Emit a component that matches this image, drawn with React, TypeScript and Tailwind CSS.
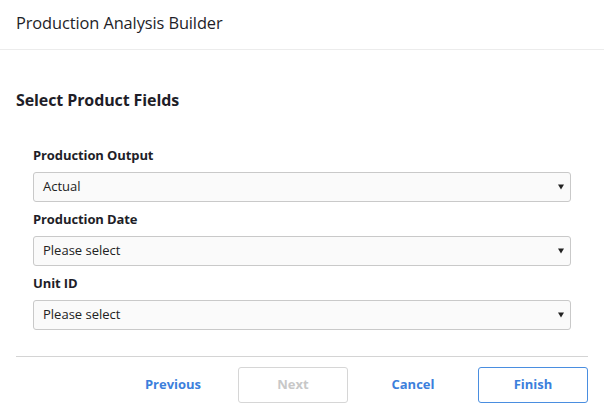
import React from 'react'

const fields = [
  { label: 'Production Output', value: 'Actual' },
  { label: 'Production Date', value: 'Please select' },
  { label: 'Unit ID', value: 'Please select' },
]

function SelectBox({ value }: { value: string }) {
  return (
    <div className="h-[30px] flex items-center justify-between bg-[#fafafa] border border-[#c9c9c9] rounded-[3px] pl-[9px] pr-[6px]">
      <span className="text-[13px] text-[#222]">{value}</span>
      <svg width="6" height="6" viewBox="0 0 6 6">
        <path d="M0 0.5 H6 L3 5.5 Z" fill="#222" />
      </svg>
    </div>
  )
}

export default function App() {
  return (
    <div className="w-[604px] h-[412px] bg-white overflow-hidden" style={{ fontFamily: '"Open Sans", "Noto Sans", sans-serif' }}>
      {/* header */}
      <div className="h-[50px] border-b border-[#ececec] flex items-center px-4">
        <h1 className="text-[16.4px] text-[#1e1e28] tracking-[-0.1px] -mt-[2px]">Production Analysis Builder</h1>
      </div>

      <div className="px-4">
        <h2 className="text-[16px] font-bold text-[#1e1e28] pt-[38px] leading-[24px] tracking-[-0.1px]">Select Product Fields</h2>

        <div className="px-[17px] pt-[32px] flex flex-col gap-[6px]">
          {fields.map((f) => (
            <div key={f.label} className="flex flex-col gap-[6px]">
              <label className="text-[13px] font-bold text-[#1e1e28] leading-[22px] tracking-[-0.1px]">{f.label}</label>
              <SelectBox value={f.value} />
            </div>
          ))}
        </div>

        <div className="mt-[26px] border-t border-[#d4d4d4]" />

        <div className="flex justify-end gap-[10px] pt-[10px]">
          <button className="w-[110px] h-[36px] text-[13px] font-bold text-[#3c7fdc]">Previous</button>
          <button className="w-[110px] h-[36px] text-[13px] font-bold text-[#c8c8c8] border border-[#d6d6d6] rounded-[3px]">Next</button>
          <button className="w-[110px] h-[36px] text-[13px] font-bold text-[#3c7fdc]">Cancel</button>
          <button className="w-[110px] h-[36px] text-[13px] font-bold text-[#3c7fdc] border border-[#4a8ee0] rounded-[3px]">Finish</button>
        </div>
      </div>
    </div>
  )
}
